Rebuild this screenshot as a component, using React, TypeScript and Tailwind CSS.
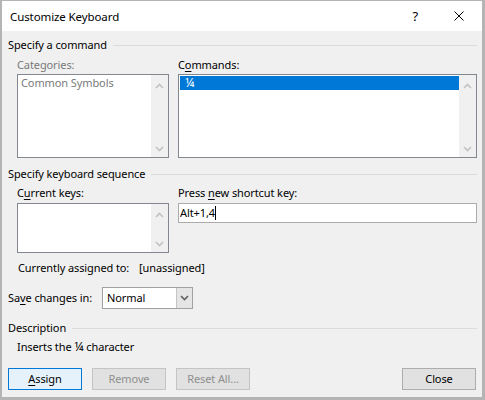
import React from "react";

const FONT = { fontFamily: '"Noto Sans", "Open Sans", Arial, sans-serif' };

function Chevron({ up, color = "#c2c2c2" }: { up?: boolean; color?: string }) {
  return (
    <svg width="9" height="6" viewBox="0 0 9 6" className="block">
      <polyline
        points={up ? "1,5 4.5,1.5 8,5" : "1,1 4.5,4.5 8,1"}
        fill="none"
        stroke={color}
        strokeWidth="1.6"
      />
    </svg>
  );
}

function ScrollBar() {
  return (
    <div className="w-[17px] h-full bg-[#f0f0f0] flex flex-col justify-between items-center pt-[8px] pb-[5px]">
      <Chevron up />
      <Chevron />
    </div>
  );
}

function SectionHeader({ title }: { title: string }) {
  return (
    <div className="flex items-center h-[16px]">
      <span className="leading-[16px] whitespace-nowrap">{title}</span>
      <div className="flex-1 h-px bg-[#dcdcdc] ml-[6px]" />
    </div>
  );
}

function Btn({
  children,
  kind = "normal",
}: {
  children: React.ReactNode;
  kind?: "default" | "normal" | "disabled";
}) {
  const cls =
    kind === "default"
      ? "bg-[#e5f1fb] border-[#0078d7] text-black"
      : kind === "disabled"
      ? "bg-[#e1e1e1] border-[#c4c4c4] text-[#8f8f8f]"
      : "bg-[#e1e1e1] border-[#adadad] text-black";
  return (
    <div
      className={`w-[74px] h-[22px] border flex items-center justify-center leading-[16px] whitespace-nowrap ${cls}`}
    >
      {children}
    </div>
  );
}

export default function App() {
  return (
    <div
      style={FONT}
      className="w-[485px] h-[400px] flex flex-col bg-[#f0f0f0] border-t border-l-2 border-r-[3px] border-b-[3px] border-[#b4b4b4] text-[11px] tracking-[-0.1px] text-black overflow-hidden"
    >
      {/* Title bar */}
      <div className="h-[30px] bg-white flex items-center pl-[8px] shrink-0">
        <span className="text-[11.5px] leading-[16px] pt-[1px]">Customize Keyboard</span>
        <span className="ml-auto text-[13px] leading-[16px] mr-[36px]">?</span>
        <svg width="10" height="10" viewBox="0 0 10 10" className="mr-[18px]">
          <path d="M0.5 0.5 L9.5 9.5 M9.5 0.5 L0.5 9.5" stroke="#000" strokeWidth="1" />
        </svg>
      </div>

      {/* Body */}
      <div className="flex flex-col pl-[6px] pr-[5px]">
        <div className="mt-[6px]">
          <SectionHeader title="Specify a command" />
        </div>

        <div className="ml-[9px] mt-[4px] flex gap-[9px]">
          <div className="w-[152px] flex flex-col">
            <span className="leading-[16px] text-[#7a7a7a]">Categories:</span>
            <div className="mt-[1px] h-[84px] border border-[#828790] bg-white flex">
              <div className="flex-1 pl-[3px] pt-[1px] leading-[14px] text-[#7a7a7a]">
                Common Symbols
              </div>
              <ScrollBar />
            </div>
          </div>
          <div className="w-[299px] flex flex-col">
            <span className="leading-[16px]">
              C<span className="underline underline-offset-2">o</span>mmands:
            </span>
            <div className="mt-[1px] h-[84px] border border-[#828790] bg-white flex">
              <div className="flex-1 pl-[1px] pt-[1px]">
                <div className="h-[14px] bg-[#0078d7] text-white text-[12.5px] leading-[14px] pl-[5px]">
                  ¼
                </div>
              </div>
              <ScrollBar />
            </div>
          </div>
        </div>

        <div className="mt-[8px]">
          <SectionHeader title="Specify keyboard sequence" />
        </div>

        <div className="ml-[9px] mt-[3px] flex gap-[9px]">
          <div className="w-[152px] flex flex-col">
            <span className="leading-[16px]">
              C<span className="underline underline-offset-2">u</span>rrent keys:
            </span>
            <div className="mt-[2px] h-[50px] border border-[#828790] bg-white flex">
              <div className="flex-1" />
              <ScrollBar />
            </div>
          </div>
          <div className="w-[299px] flex flex-col">
            <span className="leading-[16px]">
              Press <span className="underline underline-offset-2">n</span>ew shortcut key:
            </span>
            <div className="mt-[2px] h-[20px] border border-[#ababab] bg-white flex items-center pl-[1px]">
              <span className="leading-[16px]">Alt+1,4</span>
              <div className="w-px h-[14px] bg-black" />
            </div>
          </div>
        </div>

        <div className="ml-[10px] mt-[7px] flex leading-[16px] whitespace-nowrap">
          <span className="w-[121px]">Currently assigned to:</span>
          <span>[unassigned]</span>
        </div>

        <div className="mt-[11px] flex items-center">
          <span className="w-[94px] leading-[16px] whitespace-nowrap">
            Sa<span className="underline underline-offset-2">v</span>e changes in:
          </span>
          <div className="w-[91px] h-[22px] border border-[#a0a0a0] bg-white flex">
            <span className="flex-1 pl-[4px] leading-[20px]">Normal</span>
            <div className="w-[16px] h-full bg-[#e5e5e5] border-l border-[#c4c4c4] flex items-center justify-center">
              <Chevron color="#606060" />
            </div>
          </div>
        </div>

        <div className="mt-[11px]">
          <SectionHeader title="Description" />
        </div>

        <div className="ml-[9px] mt-[3px] leading-[16px]">
          Inserts the <span className="text-[12.5px]">¼</span> character
        </div>

        <div className="mt-[13px] flex gap-[10px] pr-[1px]">
          <Btn kind="default">
            <span className="underline underline-offset-2">A</span>ssign
          </Btn>
          <Btn kind="disabled">Remove</Btn>
          <Btn kind="disabled">Reset All...</Btn>
          <div className="ml-auto">
            <Btn>Close</Btn>
          </div>
        </div>
      </div>
    </div>
  );
}
